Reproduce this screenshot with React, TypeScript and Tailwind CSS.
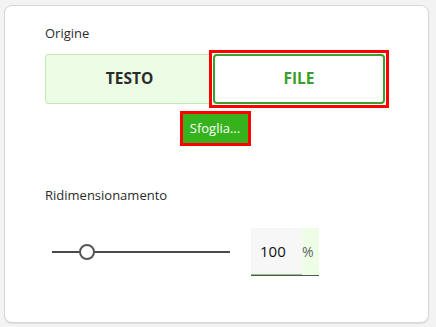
import React from "react";

export default function App() {
  return (
    <div className="w-[436px] h-[327px] bg-[#f3f3f3] pt-[5px] pl-[4px]" style={{ fontFamily: '"Open Sans", "Noto Sans", sans-serif' }}>
      <div className="w-[425px] h-[318px] bg-white border border-[#d6d6d6] rounded-[8px] shadow-[0_1px_1px_rgba(0,0,0,0.08)] pt-[18px] pl-[40px]">
        <div className="text-[13px] leading-[18px] text-[#2b2b2b]">Origine</div>
        <div className="mt-[12px] flex w-[340px] h-[50px]">
          <div className="w-[168px] h-full flex items-center justify-center bg-[#edfce5] border border-r-0 border-[#c6eab6] rounded-l-[4px] text-[15.5px] font-bold text-[#2b2b2b]">
            TESTO
          </div>
          <div className="w-[180px] h-[58px] -my-[4px] -mx-[4px] border-[3px] border-[#ff0000] p-[1px] bg-white">
            <div className="w-full h-full flex items-center justify-center bg-white border-2 border-[#3e9e2f] rounded-[4px] text-[15.5px] font-bold text-[#3a9f2a]">
              FILE
            </div>
          </div>
        </div>
        <div className="w-[340px] flex justify-center mt-[7px]">
          <div className="border-[3px] border-[#ff0000] w-[71px] h-[35px] bg-[#35b21c] flex items-center justify-center text-white text-[13px]">
            Sfoglia...
          </div>
        </div>
        <div className="mt-[40px] text-[13px] leading-[18px] text-[#2b2b2b]">Ridimensionamento</div>
        <div className="mt-[24px] flex items-center">
          <div className="ml-[7px] w-[178px] h-[16px] relative flex items-center">
            <div className="w-full h-[2px] bg-[#4a4a4a]"></div>
            <div className="absolute left-[27px] top-0 w-[16px] h-[16px] rounded-full border-2 border-[#555] bg-white"></div>
          </div>
          <div className="ml-[21px] w-[68px] h-[48px] flex border-b border-[#555]">
            <div className="w-[51px] h-full bg-[#f7f7f7] border-b border-[#94c488] flex items-center pl-[9px] text-[15px] text-[#111]">100</div>
            <div className="w-[17px] h-full bg-[#edfde6] flex items-center text-[14px] text-[#666]">%</div>
          </div>
        </div>
      </div>
    </div>
  );
}
